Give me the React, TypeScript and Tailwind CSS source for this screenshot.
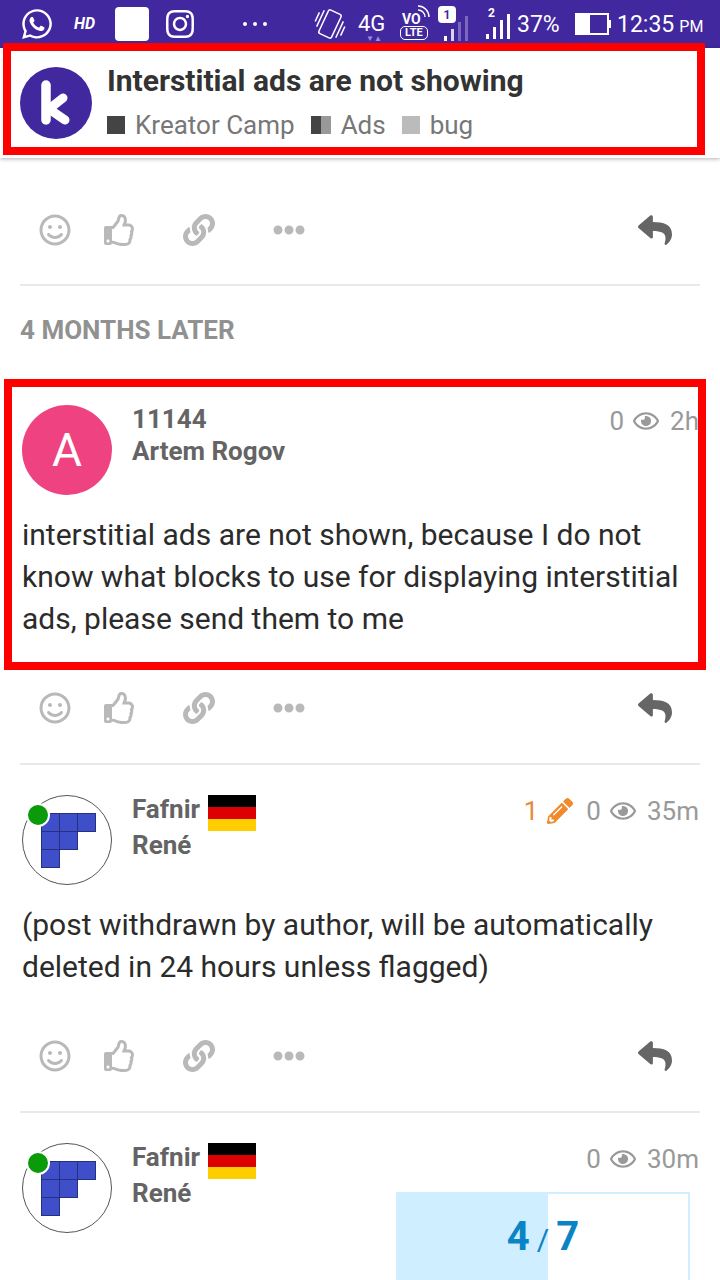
import type { ReactNode } from "react";
import { FaEllipsisH, FaInstagram, FaLink, FaPencilAlt, FaRegEye, FaRegSmile, FaRegThumbsUp, FaReply, FaWhatsapp } from "react-icons/fa";

function Signal({ id, dim = false }: { id: string; dim?: boolean }) {
  const bars = [0, 1, 2, 3];
  return (
    <svg width="30" height="28" viewBox="0 0 30 28" fill="#fff">
      {bars.map((b) => (
        <rect
          key={id + b}
          x={2 + b * 7}
          y={20 - b * 7}
          width="3"
          height={5 + b * 7}
          opacity={dim && b > 0 ? (b === 1 ? 0.8 : 0.3) : 1}
        />
      ))}
    </svg>
  );
}

function StatusBar() {
  return (
    <div className="flex h-12 items-center bg-[#41289f] pl-5 text-white">
      <FaWhatsapp className="h-[34px] w-[34px]" />
      <span className="ml-5 w-[22px] text-base font-bold italic">HD</span>
      <div className="ml-[19px] h-[34px] w-[34px] rounded bg-white" />
      <FaInstagram className="ml-[15px] h-[32px] w-[32px]" />
      <div className="ml-[47px] flex w-[26px] gap-[6px]">
        <span className="h-[4px] w-[4px] rounded-full bg-white" />
        <span className="h-[4px] w-[4px] rounded-full bg-white" />
        <span className="h-[4px] w-[4px] rounded-full bg-white" />
      </div>
      <svg className="ml-[45px]" width="32" height="32" viewBox="0 0 32 32" fill="none" stroke="#fff" strokeWidth="1.5">
        <g transform="rotate(25 16 16)">
          <rect x="9" y="3" width="14" height="26" rx="2" />
          <path d="M5 6 V24 M1.5 10 V20 M27 8 V26 M30.5 12 V22" />
        </g>
      </svg>
      <div className="relative ml-[12px] w-[30px] text-[22px] leading-none">
        4G
        <span className="absolute left-[8px] top-[22px] text-[8px] leading-none text-[#9d8fd6]">▼▲</span>
      </div>
      <div className="relative ml-[12px] flex w-[30px] flex-col items-start pt-[4px]">
        <span className="ml-[2px] text-[14px] font-bold leading-[14px]">VO</span>
        <svg className="absolute left-[17px] top-[-3px]" width="13" height="13" viewBox="0 0 13 13" fill="none" stroke="#fff" strokeWidth="1.4">
          <path d="M1 5 A7 7 0 0 1 8 12 M1 1 A11 11 0 0 1 12 12" />
        </svg>
        <span className="rounded-[5px] border border-white px-[4px] text-[11px] font-bold leading-[12px]">LTE</span>
      </div>
      <div className="relative ml-[8px] h-[34px] w-[34px]">
        <span className="absolute left-0 top-[-1px] flex h-[17px] w-[18px] items-center justify-center rounded bg-white text-[12px] font-bold text-[#41289f]">
          1
        </span>
        <div className="absolute bottom-[-3px] left-[4px]">
          <Signal id="a" dim />
        </div>
      </div>
      <div className="relative ml-[13px] h-[34px] w-[30px]">
        <span className="absolute left-[3px] top-[-3px] text-[12px] font-bold">2</span>
        <div className="absolute bottom-[-1px] left-[-1px]">
          <Signal id="b" />
        </div>
      </div>
      <span className="ml-[2px] w-[46px] text-[23px] leading-none">37%</span>
      <div className="ml-[12px] flex items-center">
        <div className="h-[22px] w-[34px] border-2 border-white">
          <div className="h-full w-[13px] bg-white" />
        </div>
        <div className="h-[8px] w-[2px] bg-white" />
      </div>
      <span className="ml-[6px] whitespace-nowrap text-[23px] leading-none">12:35</span>
      <span className="ml-[5px] mt-[5px] text-[16px] leading-none">PM</span>
    </div>
  );
}

function Tag({ label, swatch }: { label: string; swatch: ReactNode }) {
  return (
    <div className="flex items-center">
      {swatch}
      <span className="ml-[10px] text-[26px] leading-none text-[#777]">{label}</span>
    </div>
  );
}

function TopicHeader() {
  return (
    <div className="relative z-10 flex h-[110px] items-start bg-white pl-5 pt-[19px] shadow-[0_1px_4px_rgba(0,0,0,0.3)]">
      <div className="flex h-[72px] w-[72px] items-center justify-center rounded-full bg-[#41289f]">
        <svg width="34" height="46" viewBox="0 0 34 46" fill="none" stroke="#fff" strokeLinecap="round" strokeLinejoin="round">
          <path d="M7 5 V40" strokeWidth="9.5" />
          <path d="M24 18 L10 29 L26 40" strokeWidth="9" />
        </svg>
      </div>
      <div className="ml-[15px] -mt-[2px]">
        <div className="text-[30px] font-bold leading-8 text-[#333]">Interstitial ads are not showing</div>
        <div className="mt-[15px] flex gap-[16px]">
          <Tag label="Kreator Camp" swatch={<span className="h-[18px] w-[18px] bg-[#444]" />} />
          <Tag
            label="Ads"
            swatch={
              <span className="flex h-[18px] w-[20px]">
                <span className="w-[10px] bg-[#444]" />
                <span className="w-[10px] bg-[#999]" />
              </span>
            }
          />
          <Tag label="bug" swatch={<span className="h-[18px] w-[18px] bg-[#bbb]" />} />
        </div>
      </div>
      <div className="pointer-events-none absolute left-[3px] top-[-5px] h-[112px] w-[702px] border-[8px] border-[#ff0000]" />
    </div>
  );
}

function Actions() {
  return (
    <div className="flex h-8 items-center text-[#b9b9b9]">
      <FaRegSmile className="ml-[19px] h-8 w-8" />
      <FaRegThumbsUp className="ml-[33px] h-8 w-8" />
      <FaLink className="ml-[47px] h-8 w-8" />
      <FaEllipsisH className="ml-[58px] h-8 w-8" />
      <FaReply className="ml-auto h-[34px] w-[34px] text-[#666]" />
      <div className="w-[28px]" />
    </div>
  );
}

function FafnirAvatar() {
  const cells = [
    [0, 0],
    [1, 0],
    [2, 0],
    [0, 1],
    [1, 1],
    [0, 2],
  ];
  return (
    <div className="relative h-[90px] w-[90px] shrink-0 rounded-full border border-[#555] bg-white">
      <svg className="absolute left-[18px] top-[17px]" width="56" height="56" viewBox="0 0 56 56">
        {cells.map(([c, r]) => (
          <rect key={`${c}-${r}`} x={c * 18 + 0.5} y={r * 18 + 0.5} width="18" height="18" fill="#3f4fc9" stroke="#26307f" strokeWidth="1" />
        ))}
      </svg>
      <span className="absolute left-[3px] top-[7px] h-[24px] w-[24px] rounded-full border-2 border-white bg-[#0a9a0a]" />
    </div>
  );
}

function Meta({ time, edits }: { time: string; edits?: number }) {
  return (
    <div className="ml-auto mt-[3px] mr-[1px] flex h-[26px] items-center self-start whitespace-nowrap text-[26px] leading-none text-[#999]">
      {edits !== undefined && (
        <>
          <span className="text-[#e98a38]">{edits}</span>
          <FaPencilAlt className="ml-[9px] mr-[13px] h-[26px] w-[26px] text-[#f08a2c]" />
        </>
      )}
      <span>0</span>
      <FaRegEye className="ml-[9px] h-[26px] w-[26px]" />
      <span className="ml-[11px]">{time}</span>
    </div>
  );
}

function Flag() {
  return (
    <div className="ml-2 flex h-9 w-12 flex-col">
      <span className="h-3 bg-black" />
      <span className="h-3 bg-[#dd0000]" />
      <span className="h-3 bg-[#ffce00]" />
    </div>
  );
}

function Names({ top, bottom, flag = false }: { top: string; bottom: string; flag?: boolean }) {
  return (
    <div className="ml-5 text-[26px] font-bold leading-[28px] text-[#646464]">
      <div className={flag ? "flex h-9 items-start" : "flex h-8 items-start"}>
        {top}
        {flag && <Flag />}
      </div>
      <div>{bottom}</div>
    </div>
  );
}

function Divider() {
  return <div className="h-[2px] bg-[#e9e9e9]" />;
}

export default function App() {
  return (
    <div className="relative h-[1280px] w-[720px] overflow-hidden bg-white font-['Roboto',sans-serif]">
      <StatusBar />
      <TopicHeader />

      <div className="px-5">
        <div className="mt-[56px]">
          <Actions />
        </div>
        <div className="mt-[38px]">
          <Divider />
        </div>
        <div className="mt-[29px] text-[26px] font-bold leading-[30px] text-[#919191]">4 MONTHS LATER</div>

        <div className="relative mt-[60px]">
          <div className="flex items-start pl-[2px]">
            <div className="flex h-[90px] w-[90px] shrink-0 items-center justify-center rounded-full bg-[#ee4380] text-[46px] text-white">
              A
            </div>
            <div className="flex flex-1">
              <Names top="11144" bottom="Artem Rogov" />
              <Meta time="2h" />
            </div>
          </div>
          <p className="mt-[19px] pl-[2px] text-[30px] leading-[42px] text-[#2b2b2b]">
            interstitial ads are not shown, because I do not know what blocks to use for displaying interstitial ads, please send them to me
          </p>
          <div className="pointer-events-none absolute left-[-16px] top-[-26px] h-[291px] w-[702px] border-[8px] border-[#ff0000]" />
        </div>

        <div className="mt-[52px]">
          <Actions />
        </div>
        <div className="mt-[39px]">
          <Divider />
        </div>

        <div className="mt-[30px] flex items-start pl-[2px]">
          <FafnirAvatar />
          <div className="flex flex-1">
            <Names top="Fafnir" bottom="René" flag />
            <Meta time="35m" edits={1} />
          </div>
        </div>
        <p className="mt-[19px] pl-[2px] text-[30px] leading-[42px] text-[#2b2b2b]">
          (post withdrawn by author, will be automatically deleted in 24 hours unless flagged)
        </p>
        <div className="mt-[52px]">
          <Actions />
        </div>
        <div className="mt-[39px]">
          <Divider />
        </div>

        <div className="mt-[30px] flex items-start pl-[2px]">
          <FafnirAvatar />
          <div className="flex flex-1">
            <Names top="Fafnir" bottom="René" flag />
            <Meta time="30m" />
          </div>
        </div>
      </div>

      <div className="absolute left-[396px] top-[1192px] flex h-[90px] w-[294px] items-center justify-center border-2 border-[#cfeeff] bg-white">
        <div className="absolute inset-y-0 left-0 w-[150px] bg-[#cfeeff]" />
        <div className="relative flex items-baseline text-[#0a84c4]">
          <span className="text-[40px] font-bold leading-none">4</span>
          <span className="mx-[7px] text-[30px] leading-none">/</span>
          <span className="text-[40px] font-bold leading-none">7</span>
        </div>
      </div>
    </div>
  );
}
